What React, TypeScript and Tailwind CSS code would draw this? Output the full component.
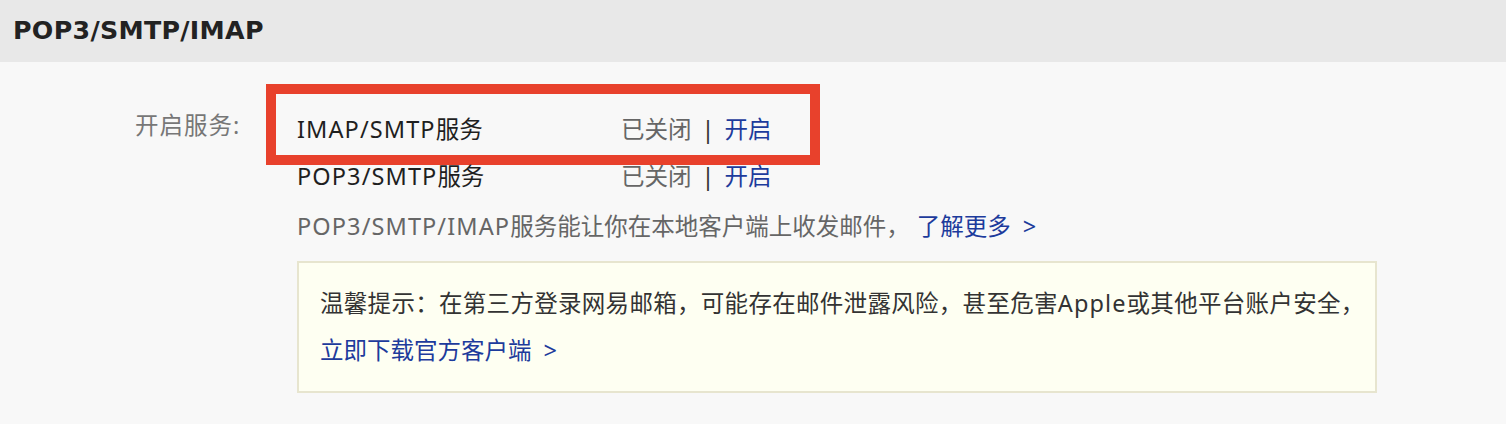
import React from "react";

const cjk = "font-['Noto_Sans','Noto_Sans_CJK_SC',sans-serif]";

interface Service {
  name: string;
  status: string;
  highlighted?: boolean;
}

const services: Service[] = [
  { name: "IMAP/SMTP", status: "已关闭", highlighted: true },
  { name: "POP3/SMTP", status: "已关闭" },
];

// latin runs in the reference sit a little looser than the CJK text around them
const Latin: React.FC<{ children: React.ReactNode }> = ({ children }) => (
  <span className="tracking-[1.1px]">{children}</span>
);

const ServiceRow: React.FC<{ service: Service }> = ({ service }) => (
  <div className="relative flex h-[47px] items-center">
    <span className="w-[324px] text-[#1f1f1f]">
      <Latin>{service.name}</Latin>服务
    </span>
    <span className="text-[#666]">{service.status}</span>
    <span className="mx-[10px] text-[#333]">|</span>
    <a href="#" className="text-[#1d3b9c]">
      开启
    </a>
    {/* annotation frame around the first row */}
    {service.highlighted && (
      <div className="pointer-events-none absolute left-[-31px] top-[-22px] h-[81px] w-[554px] border-[10px] border-[#e8412c]" />
    )}
  </div>
);

const App: React.FC = () => {
  return (
    <div className={`h-[424px] w-full bg-[#f8f8f8] ${cjk}`}>
      <div className="flex h-[62px] items-center bg-[#e8e8e8] px-[13px]">
        <h2 className="font-['DejaVu_Sans','Noto_Sans_CJK_SC',sans-serif] text-[25.3px] font-bold tracking-[0.3px] text-[#222]">
          POP3/SMTP/IMAP
        </h2>
      </div>

      <div className="flex pt-[44px] text-[23.5px]">
        <div className="w-[297px] shrink-0 pl-[135px]">
          <div className="flex h-[39px] items-center tracking-[1px] text-[#777]">开启服务:</div>
        </div>

        <div className="flex flex-col">
          {services.map((service) => (
            <ServiceRow key={service.name} service={service} />
          ))}

          <div className="mt-[3px] flex h-[47px] items-center text-[#666]">
            <span>
              <Latin>POP3/SMTP/IMAP</Latin>服务能让你在本地客户端上收发邮件，
            </span>
            <a href="#" className="ml-[7px] text-[#1d3b9c]">
              了解更多<span className="ml-[12px]">&gt;</span>
            </a>
          </div>

          <div className="mt-[11px] w-[1080px] border-2 border-[#e7e5cf] bg-[#fefff2] pb-[17px] pl-[21px] pt-[17px]">
            <p className="flex h-[47px] items-center tracking-[0.3px] text-[#333]">
              <span>
                温馨提示：在第三方登录网易邮箱，可能存在邮件泄露风险，甚至危害<Latin>Apple</Latin>或其他平台账户安全，
              </span>
            </p>
            <a href="#" className="flex h-[47px] items-center text-[#1d3b9c]">
              立即下载官方客户端<span className="ml-[12px]">&gt;</span>
            </a>
          </div>
        </div>
      </div>
    </div>
  );
};

export default App;
